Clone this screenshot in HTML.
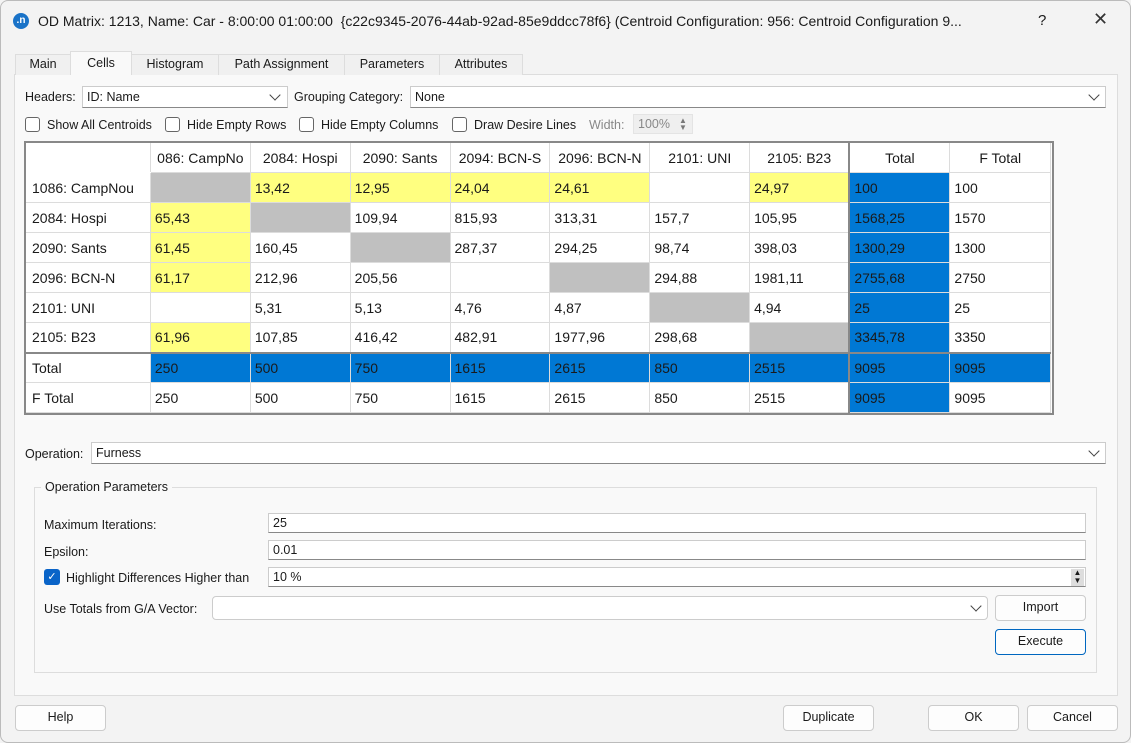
<!DOCTYPE html>
<html><head><meta charset="utf-8"><style>
*{box-sizing:border-box;margin:0;padding:0}
body{width:1131px;height:743px;background:#f3f3f3;font-family:"Liberation Sans",sans-serif;font-size:12.5px;color:#1a1a1a;position:relative;overflow:hidden}
.a{position:absolute}
.win{position:absolute;left:0;top:0;width:1131px;height:743px;border:1px solid #bbb;border-radius:8px;background:#f3f3f3}
.tab{position:absolute;top:53px;height:21px;border:1px solid #ddd;border-bottom:none;background:#f0f0f0;text-align:center;line-height:19px;font-size:12.5px}
.panel{position:absolute;left:13px;top:73px;width:1104px;height:622px;border:1px solid #ddd;background:#f9f9f9}
.cb{position:absolute;width:15px;height:15px;border:1px solid #666;border-radius:3px;background:#fff}
.inp{position:absolute;background:#fff;border:1px solid #ccc;border-bottom-color:#888;height:20px;line-height:18px;padding-left:4px}
.btn{position:absolute;background:#fdfdfd;border:1px solid #ccc;border-radius:4px;text-align:center;line-height:23px;height:26px}
.chev{position:absolute;width:8px;height:8px;border-right:1.3px solid #444;border-bottom:1.3px solid #444;transform:rotate(45deg)}
.tw{position:absolute;left:23px;top:140px;width:1030px;height:274px;border:2px solid #888;background:#fff;overflow:hidden}
table{border-collapse:collapse;position:absolute;left:-1px;top:-1px;table-layout:fixed;font-size:14px;background:#fff}
td{border:1px solid #dcdcdc;height:30px;padding:0 4px;white-space:nowrap;overflow:hidden}
tr.h td{text-align:center}
td.rh{padding-left:6px}
.y{background:#ffff80}.g{background:#c0c0c0}.b{background:#0078d4;color:#1a1a1a}
.vl{border-left:2px solid #888}
tr.tl td{border-top:2px solid #888}
</style></head><body>
<div class="win">
<div class="a" style="left:12px;top:12px;width:16px;height:16px;border-radius:50%;background:#1a73c8;color:#fff;font-size:10px;text-align:center;line-height:15px;font-weight:bold">.n</div>
<div class="a" style="left:37px;top:12px;font-size:14px;white-space:nowrap">OD Matrix: 1213, Name: Car - 8:00:00 01:00:00&nbsp; {c22c9345-2076-44ab-92ad-85e9ddcc78f6} (Centroid Configuration: 956: Centroid Configuration 9...</div>
<div class="a" style="left:1037px;top:11px;font-size:15px">?</div>
<div class="a" style="left:1092px;top:8px;font-size:18px;color:#333">✕</div>
<div class="panel"></div>
<div class="tab" style="left:14px;width:56px">Main</div>
<div class="tab" style="left:69px;width:62px;top:50px;height:24px;background:#f9f9f9;line-height:22px">Cells</div>
<div class="tab" style="left:130px;width:88px">Histogram</div>
<div class="tab" style="left:217px;width:127px">Path Assignment</div>
<div class="tab" style="left:343px;width:96px">Parameters</div>
<div class="tab" style="left:438px;width:84px">Attributes</div>
<div class="a" style="left:24px;top:89px">Headers:</div>
<div class="inp" style="left:81px;top:85px;width:206px;height:22px;line-height:20px">ID: Name</div><div class="chev" style="left:270px;top:90px"></div>
<div class="a" style="left:293px;top:89px">Grouping Category:</div>
<div class="inp" style="left:409px;top:85px;width:696px;height:22px;line-height:20px">None</div><div class="chev" style="left:1089px;top:90px"></div>
<div class="cb" style="left:24px;top:116px"></div><div class="a" style="left:46px;top:117px">Show All Centroids</div>
<div class="cb" style="left:164px;top:116px"></div><div class="a" style="left:186px;top:117px">Hide Empty Rows</div>
<div class="cb" style="left:298px;top:116px"></div><div class="a" style="left:320px;top:117px">Hide Empty Columns</div>
<div class="cb" style="left:451px;top:116px"></div><div class="a" style="left:473px;top:117px">Draw Desire Lines</div>
<div class="a" style="left:588px;top:117px;color:#888">Width:</div>
<div class="a" style="left:632px;top:113px;width:60px;height:20px;background:#efefef;border:1px solid #e4e4e4;color:#888;padding-left:4px;line-height:18px">100%</div>
<div class="a" style="left:678px;top:116px;color:#777;font-size:8px;line-height:7px">▲<br>▼</div>
<div class="tw">
<table>
<colgroup><col style="width:125px"><col style="width:100px"><col style="width:100px"><col style="width:100px"><col style="width:100px"><col style="width:100px"><col style="width:100px"><col style="width:100px"><col style="width:101px"><col style="width:101px"></colgroup>
<tr class="h"><td style="border-top-color:#fff;border-left-color:#fff;border-bottom-color:#fff;border-right-color:#dcdcdc"></td><td>086: CampNo</td><td>2084: Hospi</td><td>2090: Sants</td><td>2094: BCN-S</td><td>2096: BCN-N</td><td>2101: UNI</td><td>2105: B23</td><td class="vl">Total</td><td>F Total</td></tr>
<tr><td class="rh">1086: CampNou</td><td class="g"></td><td class="y">13,42</td><td class="y">12,95</td><td class="y">24,04</td><td class="y">24,61</td><td></td><td class="y">24,97</td><td class="b vl">100</td><td>100</td></tr>
<tr><td class="rh">2084: Hospi</td><td class="y">65,43</td><td class="g"></td><td>109,94</td><td>815,93</td><td>313,31</td><td>157,7</td><td>105,95</td><td class="b vl">1568,25</td><td>1570</td></tr>
<tr><td class="rh">2090: Sants</td><td class="y">61,45</td><td>160,45</td><td class="g"></td><td>287,37</td><td>294,25</td><td>98,74</td><td>398,03</td><td class="b vl">1300,29</td><td>1300</td></tr>
<tr><td class="rh">2096: BCN-N</td><td class="y">61,17</td><td>212,96</td><td>205,56</td><td></td><td class="g"></td><td>294,88</td><td>1981,11</td><td class="b vl">2755,68</td><td>2750</td></tr>
<tr><td class="rh">2101: UNI</td><td></td><td>5,31</td><td>5,13</td><td>4,76</td><td>4,87</td><td class="g"></td><td>4,94</td><td class="b vl">25</td><td>25</td></tr>
<tr><td class="rh">2105: B23</td><td class="y">61,96</td><td>107,85</td><td>416,42</td><td>482,91</td><td>1977,96</td><td>298,68</td><td class="g"></td><td class="b vl">3345,78</td><td>3350</td></tr>
<tr class="tl"><td class="rh">Total</td><td class="b">250</td><td class="b">500</td><td class="b">750</td><td class="b">1615</td><td class="b">2615</td><td class="b">850</td><td class="b">2515</td><td class="b vl">9095</td><td class="b">9095</td></tr>
<tr><td class="rh">F Total</td><td>250</td><td>500</td><td>750</td><td>1615</td><td>2615</td><td>850</td><td>2515</td><td class="b vl">9095</td><td>9095</td></tr>
</table>
</div>
<div class="a" style="left:24px;top:446px">Operation:</div>
<div class="inp" style="left:90px;top:441px;width:1015px;height:22px;line-height:20px">Furness</div><div class="chev" style="left:1089px;top:446px"></div>
<div class="a" style="left:33px;top:486px;width:1063px;height:186px;border:1px solid #ddd"></div>
<div class="a" style="left:40px;top:479px;background:#f9f9f9;padding:0 4px">Operation Parameters</div>
<div class="a" style="left:43px;top:517px">Maximum Iterations:</div>
<div class="inp" style="left:267px;top:512px;width:818px">25</div>
<div class="a" style="left:43px;top:544px">Epsilon:</div>
<div class="inp" style="left:267px;top:539px;width:818px">0.01</div>
<div class="a" style="left:43px;top:568px;width:16px;height:16px;border-radius:3px;background:#0a64c8;color:#fff;font-size:11px;text-align:center;line-height:16px">✓</div>
<div class="a" style="left:65px;top:570px">Highlight Differences Higher than</div>
<div class="inp" style="left:267px;top:566px;width:818px">10 %</div>
<div class="a" style="left:1070px;top:568px;width:13px;height:17px;background:#ddd;font-size:8px;line-height:8px;text-align:center">▲<br>▼</div>
<div class="a" style="left:43px;top:601px">Use Totals from G/A Vector:</div>
<div class="inp" style="left:211px;top:595px;width:776px;height:24px;border-radius:4px;border-color:#ccc"></div><div class="chev" style="left:971px;top:601px"></div>
<div class="btn" style="left:994px;top:594px;width:91px">Import</div>
<div class="btn" style="left:994px;top:628px;width:91px;border-color:#0067c0">Execute</div>
<div class="btn" style="left:14px;top:704px;width:91px">Help</div>
<div class="btn" style="left:782px;top:704px;width:91px">Duplicate</div>
<div class="btn" style="left:927px;top:704px;width:91px">OK</div>
<div class="btn" style="left:1026px;top:704px;width:91px">Cancel</div>
</div>
</body></html>
